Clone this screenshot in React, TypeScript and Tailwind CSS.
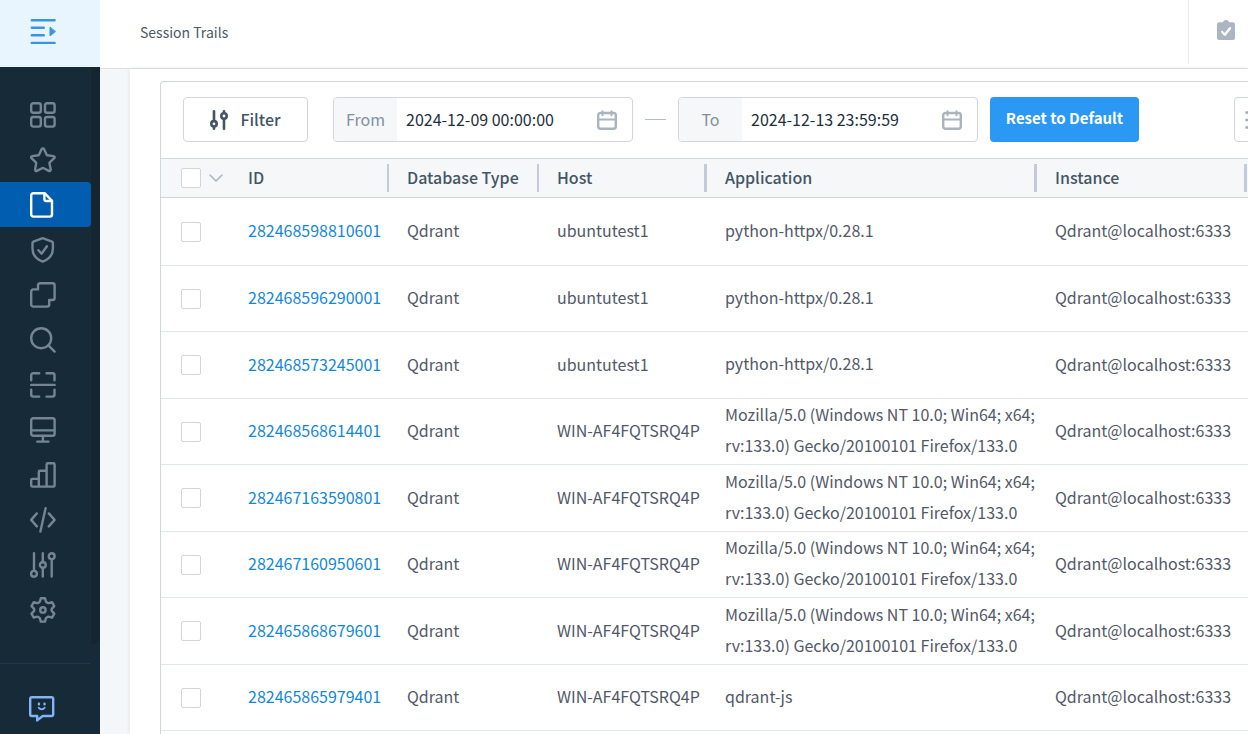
import { ReactNode, useState } from "react";

type Session = {
  id: string;
  dbType: string;
  host: string;
  application: string;
  instance: string;
};

const FIREFOX =
  "Mozilla/5.0 (Windows NT 10.0; Win64; x64; rv:133.0) Gecko/20100101 Firefox/133.0";

const makeSession = (id: string, host: string, application: string): Session => ({
  id,
  dbType: "Qdrant",
  host,
  application,
  instance: "Qdrant@localhost:6333",
});

const sessions: Session[] = [
  makeSession("282468598810601", "ubuntutest1", "python-httpx/0.28.1"),
  makeSession("282468596290001", "ubuntutest1", "python-httpx/0.28.1"),
  makeSession("282468573245001", "ubuntutest1", "python-httpx/0.28.1"),
  makeSession("282468568614401", "WIN-AF4FQTSRQ4P", FIREFOX),
  makeSession("282467163590801", "WIN-AF4FQTSRQ4P", FIREFOX),
  makeSession("282467160950601", "WIN-AF4FQTSRQ4P", FIREFOX),
  makeSession("282465868679601", "WIN-AF4FQTSRQ4P", FIREFOX),
  makeSession("282465865979401", "WIN-AF4FQTSRQ4P", "qdrant-js"),
];

const navItems: { label: string; icon: ReactNode }[] = [
  {
    label: "Dashboard",
    icon: (
      <>
        <rect x="1.2" y="1.2" width="9.6" height="9.6" rx="2" />
        <rect x="15" y="1.2" width="9.6" height="9.6" rx="2" />
        <rect x="1.2" y="15" width="9.6" height="9.6" rx="2" />
        <rect x="15" y="15" width="9.6" height="9.6" rx="2" />
      </>
    ),
  },
  {
    label: "Favorites",
    icon: (
      <path d="M11.7 2.1a1.3 1.3 0 0 1 2.3 0l2.7 5.6a1 1 0 0 0 .8.6l6 .8a1.2 1.2 0 0 1 .7 2.1l-4.4 4.2a1 1 0 0 0-.3 1l1.2 6.1a1.3 1.3 0 0 1-1.9 1.4l-5.4-2.900a1 1 0 0 0-1 0L7 23.900a1.300 1.300 0 0 1-1.900-1.400l1.100-6.100a1 1 0 0 0-.3-1l-4.400-4.200a1.200 1.200 0 0 1 .7-2.100l6-.8a1 1 0 0 0 .8-.6z" />
    ),
  },
  {
    label: "Reports",
    icon: (
      <>
        <path d="M3.200 1.200h11.400l7.400 7.600v13.800a2 2 0 0 1-2 2H3.200a2 2 0 0 1-2-2V3.200a2 2 0 0 1 2-2z" />
        <path d="M14.400 1.400v5.800a1.800 1.800 0 0 0 1.800 1.800H22" />
      </>
    ),
  },
  {
    label: "Security",
    icon: (
      <>
        <path d="M12.700 1.200 22 4.600a1.400 1.400 0 0 1 .9 1.400v5.500c0 6.300-4.200 10.800-10.200 13.100C6.700 22.300 2.500 17.800 2.500 11.500V6a1.400 1.400 0 0 1 .9-1.400z" />
        <path d="m8.400 13.200 3.200 3.500 5.300-7.400" />
      </>
    ),
  },
  {
    label: "Rules",
    icon: (
      <path d="M10 1.200h12.600a2 2 0 0 1 2 2v12.800a2 2 0 0 1-2 2h-3.400v4.600a2 2 0 0 1-2 2H3.200a2 2 0 0 1-2-2V9.400a2 2 0 0 1 2-2H8V3.200a2 2 0 0 1 2-2z" />
    ),
  },
  {
    label: "Search",
    icon: (
      <>
        <circle cx="11.200" cy="11.200" r="10" />
        <path d="m18.400 18.400 6.200 6.200" />
      </>
    ),
  },
  {
    label: "Scan",
    icon: (
      <path d="M1.200 8.200v-5a2 2 0 0 1 2-2h6M16.500 1.200h6a2 2 0 0 1 2 2v5M1.200 17.600v5a2 2 0 0 0 2 2h6M16.500 24.600h6a2 2 0 0 0 2-2v-5M1.200 12.900h23.400" />
    ),
  },
  {
    label: "Monitoring",
    icon: (
      <>
        <rect x="1.200" y="1.200" width="23.400" height="17.600" rx="2" />
        <path d="M1.400 13.400h23M12.900 19v5M7.200 24.600h11.300" />
      </>
    ),
  },
  {
    label: "Statistics",
    icon: (
      <path d="M8.800 24.600H2.400a1.200 1.200 0 0 1-1.200-1.200v-5.300a1.200 1.200 0 0 1 1.200-1.200h6.400zM8.800 24.600V10a1.200 1.200 0 0 1 1.200-1.200h6.600v15.800zM16.600 24.600V2.400a1.200 1.200 0 0 1 1.200-1.200h5.600a1.200 1.200 0 0 1 1.200 1.200v21a1.200 1.200 0 0 1-1.200 1.200z" />
    ),
  },
  {
    label: "Scripts",
    icon: (
      <path d="m6.800 6.400-5.600 6.500 5.600 6.500M18.800 6.400l5.800 6.500-5.800 6.500M15.600 1.200l-5.200 23.400" />
    ),
  },
  {
    label: "Tuning",
    icon: (
      <>
        <path d="M4 1.200v17.400M12.800 1.200v9M12.800 15.700v8.900M21.700 7.200v17.400" />
        <circle cx="4" cy="21.800" r="2.900" />
        <circle cx="12.800" cy="12.900" r="2.900" />
        <circle cx="21.700" cy="4.200" r="2.900" />
      </>
    ),
  },
  {
    label: "Settings",
    icon: (
      <>
        <path d="M10.800 1.200h4.200l.9 3.300a1 1 0 0 0 .5.600l1.500.9a1 1 0 0 0 .8.100l3.300-.900 2.300 4-2.400 2.400a1 1 0 0 0-.3.700v1.200a1 1 0 0 0 .3.700l2.400 2.400-2.300 4-3.300-.9a1 1 0 0 0-.8.100l-1.500.9a1 1 0 0 0-.5.600l-.9 3.300h-4.200l-.9-3.300a1 1 0 0 0-.5-.6l-1.500-.9a1 1 0 0 0-.8-.1l-3.300.9-2.300-4 2.400-2.400a1 1 0 0 0 .3-.7v-1.200a1 1 0 0 0-.3-.7L1.500 9.200l2.300-4 3.300.9a1 1 0 0 0 .8-.1l1.500-.9a1 1 0 0 0 .5-.6z" />
        <circle cx="12.900" cy="12.900" r="2.700" />
      </>
    ),
  },
];

function NavIcon({ children }: { children: ReactNode }) {
  return (
    <svg
      viewBox="0 0 26 26"
      className="size-[26px] fill-none stroke-current"
      strokeWidth="2.4"
      strokeLinecap="round"
      strokeLinejoin="round"
      aria-hidden="true"
    >
      {children}
    </svg>
  );
}

function Sidebar() {
  const [active, setActive] = useState("Reports");

  return (
    <aside className="flex w-[100px] shrink-0 flex-col bg-[#172a38]">
      <button
        type="button"
        aria-label="Expand menu"
        className="flex h-[67px] shrink-0 items-center bg-[#e8f4fe] pr-3 pb-1 pl-[30px] text-[#3a94e4]"
      >
        <NavIcon>
          <path d="M1.800 1.200h22.800M1.800 8.800h12M1.800 16.300h12M1.800 23.900h22.800" />
          <path d="M20 8.500v8.400l5.200-4.200z" className="fill-current" strokeWidth="1" />
        </NavIcon>
      </button>
      <nav className="flex h-[577px] shrink-0 rounded-br-lg bg-[#152630]">
        <ul className="w-[91px] bg-[#172a38] pt-[25px]">
          {navItems.map((item) => (
            <li key={item.label}>
              <button
                type="button"
                aria-label={item.label}
                onClick={() => setActive(item.label)}
                className={
                  item.label === active
                    ? "flex h-[45px] w-full items-center rounded-r-sm bg-[#015db0] pl-[30px] text-white"
                    : "flex h-[45px] w-full items-center pl-[30px] text-[#748694]"
                }
              >
                <NavIcon>{item.icon}</NavIcon>
              </button>
            </li>
          ))}
        </ul>
      </nav>
      <div className="mt-[19px] w-[90px] border-t border-[#22384a] pt-8">
        <button type="button" aria-label="Support chat" className="ml-[29px] block text-[#82b4f8]">
          <NavIcon>
            <path d="M2.700 1.200h20a1.500 1.500 0 0 1 1.500 1.500v15.800a1.500 1.500 0 0 1-1.500 1.500h-9l-5.500 4.400V20H2.700a1.500 1.500 0 0 1-1.500-1.500V2.700a1.500 1.500 0 0 1 1.500-1.500z" />
            <path d="M9.900 7.800v.4M15.500 7.800v.4" />
            <path d="M9.700 11.800c1.600 2 4.400 2 6 0" strokeWidth="1.800" />
          </NavIcon>
        </button>
      </div>
    </aside>
  );
}

function TopBar() {
  return (
    <header className="flex h-[69px] shrink-0 justify-between border-b border-[#dde1e6] bg-white pl-10">
      <h1 className="self-center pb-1 text-sm text-[#4a5a68]">Session Trails</h1>
      <div className="mb-1 flex border-l border-[#e8ebee] pr-[13px] pb-1 pl-7">
        <button type="button" aria-label="Tasks" className="text-[#abb6c2]">
          <svg viewBox="0 0 18 20" className="h-5 w-[18px]" aria-hidden="true">
            <path
              className="fill-current"
              d="M6 2.200C6.300.9 7.500 0 9 0s2.700.9 3 2.200h4a2 2 0 0 1 2 2V18a2 2 0 0 1-2 2H2a2 2 0 0 1-2-2V4.200a2 2 0 0 1 2-2z"
            />
            <path
              className="fill-none stroke-white"
              strokeWidth="2.400"
              strokeLinecap="round"
              strokeLinejoin="round"
              d="m5.200 12 2.600 2.800 5.200-6.600"
            />
          </svg>
        </button>
      </div>
    </header>
  );
}

function DateField({ id, label, value }: { id: string; label: string; value: string }) {
  const [date, setDate] = useState(value);

  return (
    <div className="flex h-[45px] w-[300px] shrink-0 overflow-hidden rounded border border-[#d1d6dd] bg-white">
      <label
        htmlFor={id}
        className="flex w-[63px] shrink-0 items-center justify-center bg-[#f5f7f9] pb-0.5 text-[#82909d]"
      >
        {label}
      </label>
      <input
        id={id}
        type="text"
        value={date}
        onChange={(e) => setDate(e.target.value)}
        className="min-w-0 flex-1 pb-0.5 pl-[9px] text-[#1d2f40] outline-none"
      />
      <button type="button" aria-label={`${label} calendar`} className="px-[15px] text-[#a9b4bf]">
        <svg
          viewBox="0 0 20 20"
          className="size-5 fill-none stroke-current"
          strokeWidth="2.400"
          strokeLinecap="round"
          aria-hidden="true"
        >
          <rect x="1.200" y="3" width="17.600" height="15.800" rx="2.200" />
          <path d="M1.500 9.500h17M5.500 1.200v4M14.500 1.200v4" strokeWidth="2" />
        </svg>
      </button>
    </div>
  );
}

function Toolbar() {
  return (
    <div className="flex items-center px-[22px] pt-[15px] pb-4">
      <button
        type="button"
        className="mr-[25px] flex h-[45px] w-[125px] shrink-0 items-center justify-center gap-3 rounded border border-[#d1d6dd] bg-white font-medium text-[#435565]"
      >
        <svg
          viewBox="0 0 18 20"
          className="h-5 w-[18px] fill-none stroke-current"
          strokeWidth="2.600"
          strokeLinecap="round"
          aria-hidden="true"
        >
          <path d="M4 1.300v9.500M4 17v1.700M14 1.300v1.400M14 9.200v9.500" />
          <circle cx="4" cy="13.800" r="2.700" />
          <circle cx="14" cy="6" r="2.700" />
        </svg>
        <span className="pb-0.5">Filter</span>
      </button>
      <DateField id="date-from" label="From" value="2024-12-09 00:00:00" />
      <span className="mx-3 h-px w-[21px] shrink-0 bg-[#b3bdc7]" />
      <DateField id="date-to" label="To" value="2024-12-13 23:59:59" />
      <button
        type="button"
        className="ml-3 h-[45px] w-[149px] shrink-0 rounded bg-[#2b98f3] pb-0.5 text-[15px] font-bold text-white"
      >
        Reset to Default
      </button>
      <button
        type="button"
        aria-label="Columns"
        className="ml-auto flex h-[45px] w-[45px] shrink-0 items-center rounded border border-[#d1d6dd] pl-2.5 text-[#9eaab5]"
      >
        <svg
          viewBox="0 0 24 20"
          className="h-5 w-6 fill-none stroke-current"
          strokeWidth="2.400"
          strokeLinecap="round"
          aria-hidden="true"
        >
          <path d="M1.400 2.500h2M1.400 10h2M1.400 17.500h2M8 2.500h14M8 10h14M8 17.500h14" />
        </svg>
      </button>
    </div>
  );
}

function Checkbox({ label }: { label: string }) {
  return (
    <input
      type="checkbox"
      aria-label={label}
      className="block size-5 appearance-none rounded-[2px] border border-[#d3d5db] bg-white checked:bg-[#2b98f3]"
    />
  );
}

function HeadCell({ children, narrow }: { children: string; narrow?: boolean }) {
  return (
    <th scope="col" className="border-b border-[#d1d6dd] p-0 text-left font-medium">
      <div
        className={
          narrow
            ? "flex h-7 items-center border-r-2 border-[#c4cbd8] pb-0.5 pl-[18px]"
            : "flex h-7 items-center border-r-3 border-[#c4cbd8] pb-0.5 pl-[18px]"
        }
      >
        {children}
      </div>
    </th>
  );
}

function SessionsTable() {
  return (
    <table className="w-full table-fixed border-separate border-spacing-0 text-[#525868]">
      <colgroup>
        <col className="w-[69px]" />
        <col className="w-[159px]" />
        <col className="w-[150px]" />
        <col className="w-[168px]" />
        <col className="w-[330px]" />
        <col className="w-[210px]" />
        <col />
      </colgroup>
      <thead className="bg-[#f5f7f9] text-[#435565]">
        <tr className="h-[39px]">
          <th className="border-b border-[#d1d6dd] p-0 pl-5">
            <div className="flex items-center gap-2">
              <Checkbox label="Select all sessions" />
              <svg
                viewBox="0 0 14 8"
                className="h-2 w-3.5 shrink-0 fill-none stroke-[#adb7c1]"
                strokeWidth="1.600"
                strokeLinecap="round"
                strokeLinejoin="round"
                aria-hidden="true"
              >
                <path d="m1 1 6 6 6-6" />
              </svg>
            </div>
          </th>
          <HeadCell narrow>ID</HeadCell>
          <HeadCell narrow>Database Type</HeadCell>
          <HeadCell>Host</HeadCell>
          <HeadCell>Application</HeadCell>
          <HeadCell>Instance</HeadCell>
          <td className="border-b border-[#d1d6dd]" />
        </tr>
      </thead>
      <tbody className="[&_td]:border-b [&_td]:border-[#e2e5ea]">
        {sessions.map((session) => (
          <tr key={session.id} className="h-[67px] first:h-[68px] even:h-[66px]">
            <td className="p-0 pl-5">
              <Checkbox label={`Select session ${session.id}`} />
            </td>
            <td className="p-0 pb-[3px] pl-[18px]">
              <a href={`#${session.id}`} className="text-[#1287dc]">
                {session.id}
              </a>
            </td>
            <td className="p-0 pb-[3px] pl-[18px]">{session.dbType}</td>
            <td className="p-0 pb-[3px] pl-[18px] whitespace-nowrap">{session.host}</td>
            <td className="p-0 pb-[3px] pl-[18px] leading-[31px]">{session.application}</td>
            <td className="p-0 pb-[3px] pl-[18px] whitespace-nowrap">{session.instance}</td>
            <td />
          </tr>
        ))}
      </tbody>
    </table>
  );
}

function App() {
  return (
    <div className="flex h-screen overflow-hidden bg-[#f4f7f9] font-['Source_Sans_Pro','Noto_Sans_CJK_SC',sans-serif] text-base">
      <Sidebar />
      <div className="flex min-w-0 flex-1 flex-col">
        <TopBar />
        <main className="ml-[30px] flex min-h-0 flex-1 flex-col overflow-hidden bg-white pt-3 pl-[30px] shadow-[0_0_4px_rgba(40,60,90,0.12)]">
          <div className="min-w-[1142px] flex-1 rounded-t border border-b-0 border-[#d1d6dd]">
            <Toolbar />
            <div className="border-t border-[#d1d6dd]">
              <SessionsTable />
            </div>
          </div>
        </main>
      </div>
    </div>
  );
}

export default App;
